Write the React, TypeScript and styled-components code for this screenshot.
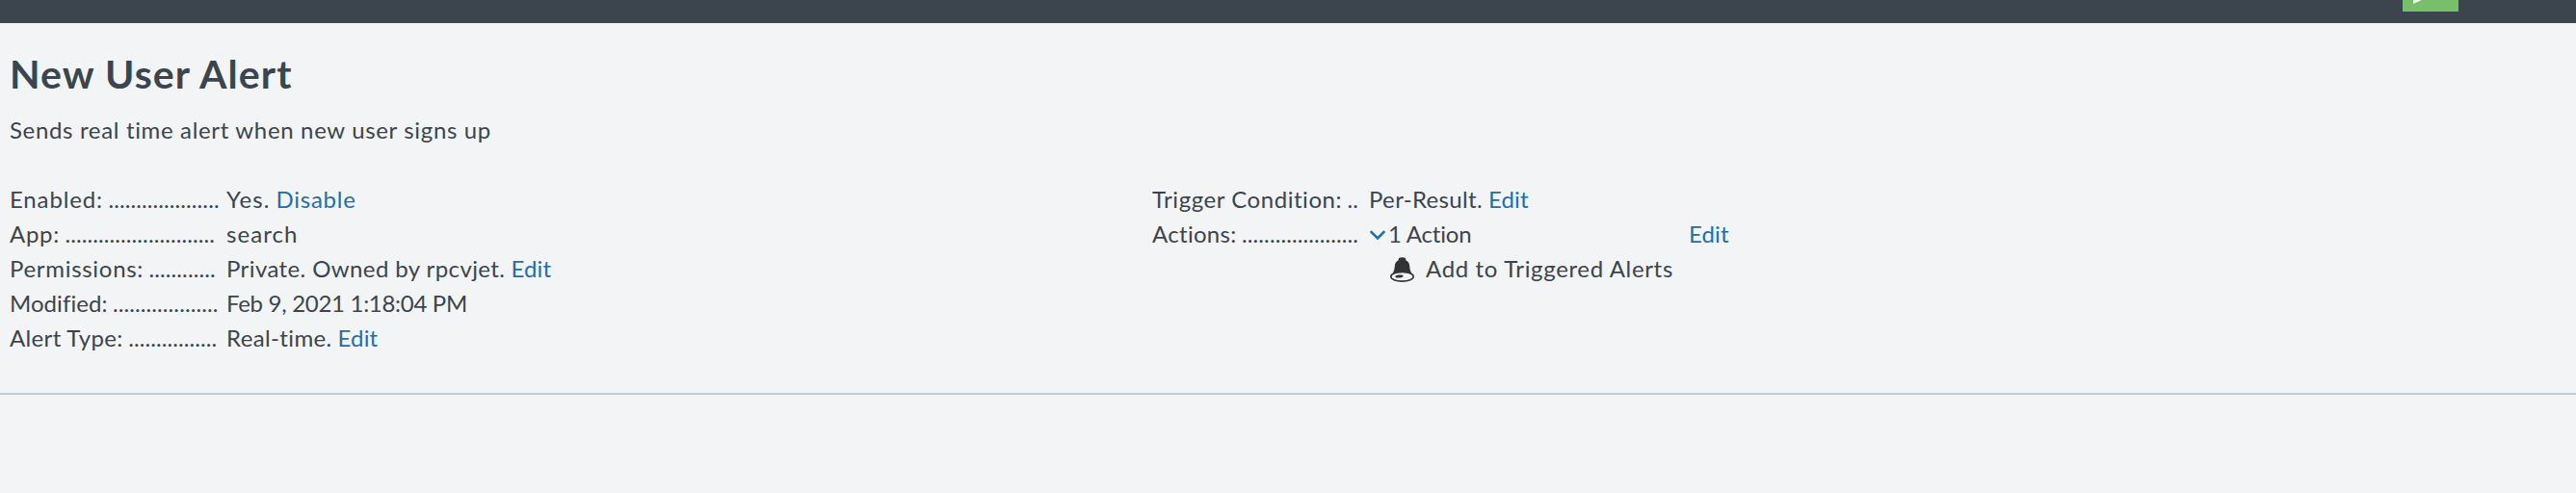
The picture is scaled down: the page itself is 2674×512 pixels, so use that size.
import React from 'react';
import styled, { createGlobalStyle } from 'styled-components';

const GlobalStyle = createGlobalStyle`
  body {
    margin: 0;
    background: #f2f4f5;
    color: #3c444d;
    font-family: Lato, "Liberation Sans", sans-serif;
    font-size: 24px;
    line-height: 36px;
    font-kerning: normal;
  }
`;

const Page = styled.div`
  min-height: 512px;
  overflow: hidden;
`;

const TopBar = styled.div`
  display: flex;
  justify-content: flex-end;
  align-items: flex-start;
  height: 24px;
  padding-right: 122px;
  background: #3c444d;
`;

const AppBadge = styled.div`
  width: 58px;
  height: 12px;
  background: #77bf6b;

  svg {
    display: block;
  }
`;

const Header = styled.header`
  padding: 29px 10px 0;
`;

const Title = styled.h1`
  margin: 0;
  font-size: 41px;
  line-height: 48px;
  font-weight: 700;
  letter-spacing: 1.1px;
`;

const Description = styled.p`
  margin: 16px 0 0;
  letter-spacing: 0.66px;
`;

const Details = styled.section`
  display: grid;
  grid-template-columns: 1186px 1fr;
  align-items: start;
  height: 219px;
  padding: 36px 10px 0;
  border-bottom: 2px solid #c3cbd4;
`;

const Properties = styled.dl`
  display: grid;
  grid-template-columns: 217px max-content;
  column-gap: 8px;
  margin: 0;
`;

const Label = styled.dt<{ $track: number }>`
  height: 36px;
  white-space: nowrap;
  letter-spacing: ${(p) => p.$track}px;
`;

const Leader = styled.span`
  margin-left: 5.5px;
  letter-spacing: 0.1px;
`;

const Value = styled.dd`
  margin: 0;
  white-space: pre;
`;

const Words = styled.span<{ $track: number }>`
  letter-spacing: ${(p) => p.$track}px;
`;

const Link = styled.a<{ $track?: number; $gap?: number }>`
  margin-left: ${(p) => p.$gap ?? 6}px;
  color: #1e6eb0;
  letter-spacing: ${(p) => p.$track ?? 0.15}px;
  text-decoration: none;
  cursor: pointer;
`;

const ActionRow = styled.div`
  display: flex;
  height: 36px;
`;

const ActionToggle = styled.div`
  display: flex;
  width: 332px;
`;

const Chevron = styled.svg`
  width: 20px;
  height: 36px;
`;

const ActionItem = styled.div`
  display: flex;
  height: 36px;
  padding-left: 21px;
`;

const Bell = styled.svg`
  width: 27px;
  height: 28px;
  margin: 4px 11px 0 0;
`;

interface PropertyProps {
  name: string;
  track: number;
  dots: number;
  children: React.ReactNode;
}

function Property({ name, track, dots, children }: PropertyProps) {
  return (
    <>
      <Label $track={track}>
        {name}:<Leader>{'.'.repeat(dots)}</Leader>
      </Label>
      <Value>{children}</Value>
    </>
  );
}

export default function App() {
  return (
    <Page>
      <GlobalStyle />
      <TopBar>
        <AppBadge>
          <svg width="58" height="12" viewBox="0 0 58 12">
            <path d="M11 -14L30 -5L11 4Z" fill="#fff" />
          </svg>
        </AppBadge>
      </TopBar>
      <Header>
        <Title>New User Alert</Title>
        <Description>Sends real time alert when new user signs up</Description>
      </Header>
      <Details>
        <Properties>
          <Property name="Enabled" track={0.85} dots={20}>
            <Words $track={1.1}>Yes.</Words>
            <Link $track={0.75}>Disable</Link>
          </Property>
          <Property name="App" track={0.7} dots={27}>
            <Words $track={1.05}>search</Words>
          </Property>
          <Property name="Permissions" track={0.7} dots={12}>
            <Words $track={0.4}>Private. Owned by rpcvjet.</Words>
            <Link>Edit</Link>
          </Property>
          <Property name="Modified" track={0.05} dots={19}>
            <Words $track={-0.3}>Feb 9, 2021 1:18:04 PM</Words>
          </Property>
          <Property name="Alert Type" track={0.34} dots={16}>
            <Words $track={0.37}>Real-time.</Words>
            <Link>Edit</Link>
          </Property>
        </Properties>
        <Properties>
          <Property name="Trigger Condition" track={0.55} dots={2}>
            <Words $track={0.34}>Per-Result.</Words>
            <Link>Edit</Link>
          </Property>
          <Property name="Actions" track={0.3} dots={21}>
            <ActionRow>
              <ActionToggle>
                <Chevron viewBox="0 0 20 36">
                  <path d="M1.7 15.200L9 22.500L16.300 15.200" fill="none" stroke="#1e6eb0" strokeWidth="2.6" />
                </Chevron>
                <Words $track={-0.2}>1 Action</Words>
              </ActionToggle>
              <Link $gap={0}>Edit</Link>
            </ActionRow>
            <ActionItem>
              <Bell viewBox="0 0 27 28">
                <ellipse cx="13.500" cy="22.200" rx="11.700" ry="4.900" fill="#f2f4f5" stroke="#333" strokeWidth="1.600" />
                <path
                  d="M9.700 4.500Q9.700 2.300 13.500 2.300Q17.300 2.300 17.300 4.500L17.500 5.500Q20.500 6.500 21 10L21.700 15Q22.200 17.500 24.500 20.300Q20 18.300 13.500 18.300Q7 18.300 2.500 20.300Q4.800 17.500 5.300 15L6 10Q6.500 6.500 9.500 5.500Z"
                  fill="#333"
                />
                <ellipse cx="10.500" cy="22" rx="4.200" ry="1.500" fill="#333" transform="rotate(-7 10.500 22)" />
              </Bell>
              <Words $track={0.65}>Add to Triggered Alerts</Words>
            </ActionItem>
          </Property>
        </Properties>
      </Details>
    </Page>
  );
}
